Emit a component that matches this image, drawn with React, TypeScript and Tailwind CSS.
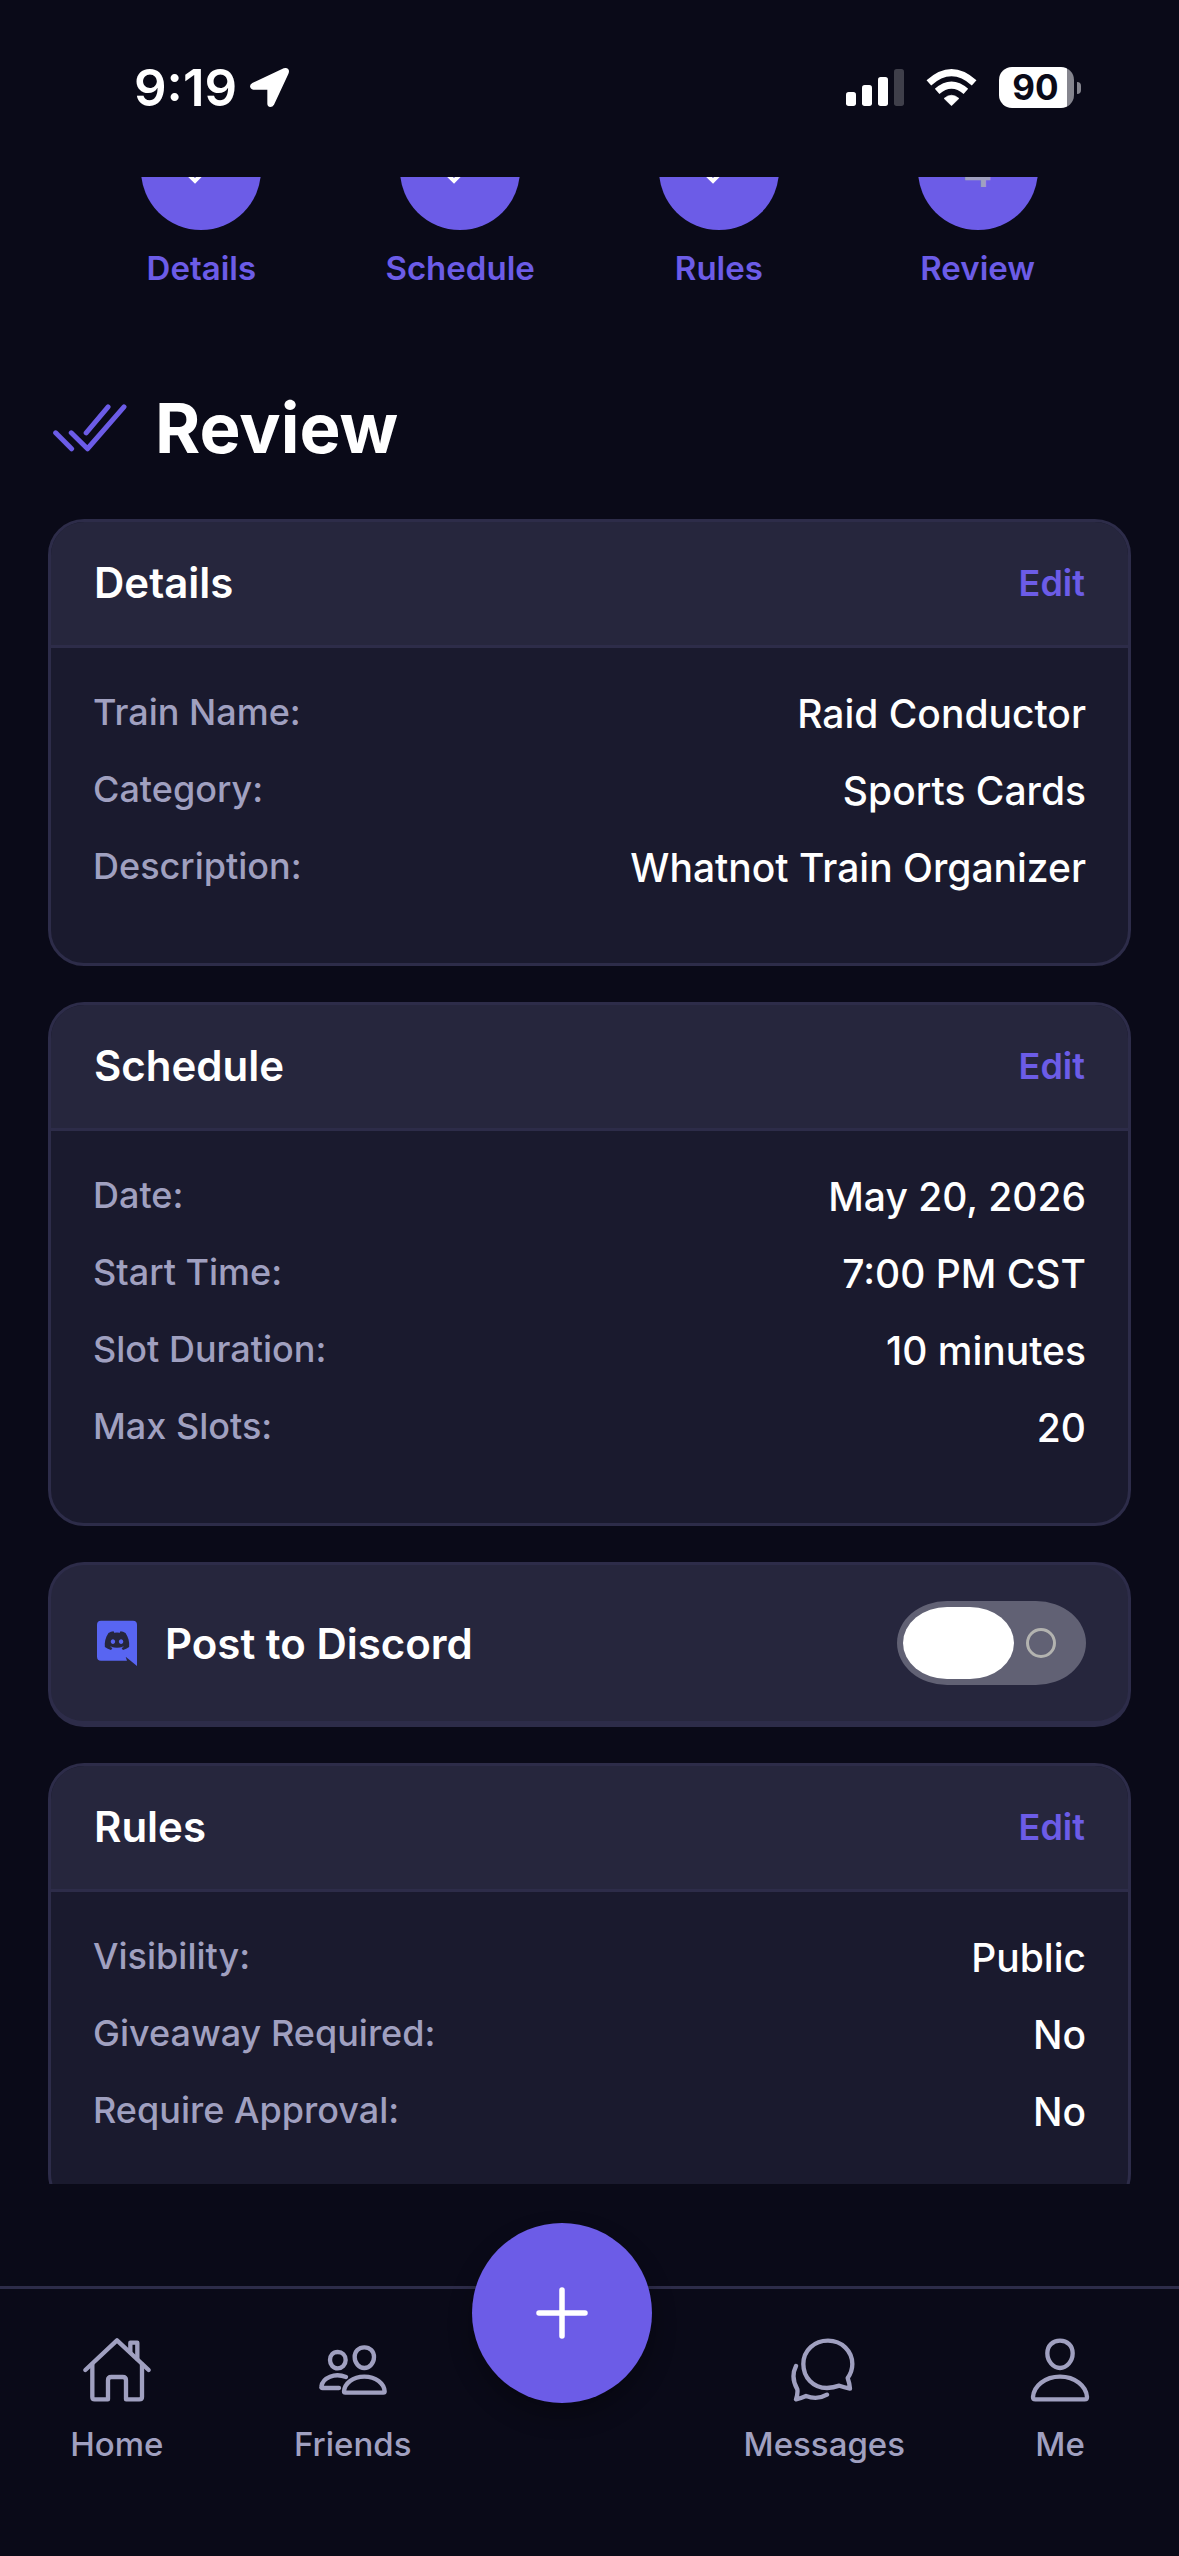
import { useState } from "react";
import type { ReactNode } from "react";
import { FaDiscord } from "react-icons/fa";

type Row = { label: string; value: string };

const steps = ["Details", "Schedule", "Rules", "Review"];

const details: Row[] = [
  { label: "Train Name:", value: "Raid Conductor" },
  { label: "Category:", value: "Sports Cards" },
  { label: "Description:", value: "Whatnot Train Organizer" },
];

const schedule: Row[] = [
  { label: "Date:", value: "May 20, 2026" },
  { label: "Start Time:", value: "7:00 PM CST" },
  { label: "Slot Duration:", value: "10 minutes" },
  { label: "Max Slots:", value: "20" },
];

const rules: Row[] = [
  { label: "Visibility:", value: "Public" },
  { label: "Giveaway Required:", value: "No" },
  { label: "Require Approval:", value: "No" },
];

function LocationArrow() {
  return (
    <svg viewBox="0 0 117 117" className="h-[39px] w-[39px]" fill="white" aria-hidden="true">
      <path d="M7 45 L101 1 Q110 -2 115 4 Q119 9 115 18 L72 110 Q68 117 61 117 Q52 116 52 107 V65 H10 Q1 64 0 55 Q0 49 7 45Z" />
    </svg>
  );
}

function Signal() {
  return (
    <svg viewBox="0 0 174 111" className="h-[37px] w-[58px]" fill="white" aria-hidden="true">
      <rect x="0" y="69" width="30" height="42" rx="8" />
      <rect x="48" y="48" width="30" height="63" rx="8" />
      <rect x="96" y="24" width="30" height="87" rx="8" />
      <rect x="144" y="0" width="30" height="111" rx="8" opacity="0.22" />
    </svg>
  );
}

function Wifi() {
  return (
    <svg viewBox="0 0 153 112" className="h-[37px] w-[51px]" aria-hidden="true">
      <path d="M76.5 111 L54 89 Q76.5 70 99 89Z" fill="white" stroke="white" strokeWidth="2" strokeLinejoin="round" />
      <g fill="none" stroke="white" strokeWidth="21">
        <path d="M33 68 Q76.5 30 120 68" />
        <path d="M8 42 Q76.5 -20 145 42" />
      </g>
    </svg>
  );
}

function StatusBar() {
  return (
    <header className="flex h-[177px] shrink-0 items-center justify-between pb-[2px] pl-[134px] pr-[98px]">
      <div className="flex items-center gap-[13px]">
        <span className="text-[51px] font-semibold leading-none">9:19</span>
        <LocationArrow />
      </div>
      <div className="flex items-center">
        <Signal />
        <div className="ml-[22px] mr-[22px]">
          <Wifi />
        </div>
        <div className="flex h-[41px] w-[75px] items-center justify-center rounded-[13px] bg-linear-to-r from-white from-91% to-[#85858e] to-91% pr-[2px] text-[35px] font-bold leading-none text-[#0a0a18]">
          90
        </div>
        <div className="ml-[3px] h-[12px] w-[4px] rounded-r-full bg-[#85858e]" />
      </div>
    </header>
  );
}

function Steps() {
  return (
    <ol className="grid grid-cols-4 px-[72px]">
      {steps.map((step, i) => (
        <li key={step} className="flex flex-col items-center">
          <div className="flex h-[53px] flex-col justify-end overflow-hidden">
            <div className="flex h-[120px] w-[120px] shrink-0 items-center justify-center rounded-full bg-[#6c5ce7]">
              {i < 3 ? (
                <svg viewBox="0 0 48 48" className="h-[48px] w-[48px]" fill="none" stroke="white" strokeWidth="4" aria-hidden="true">
                  <path d="M5 22 L18 35 L43 9" />
                </svg>
              ) : (
                <span className="text-[46px] font-medium leading-none text-[#a0a0c0]">4</span>
              )}
            </div>
          </div>
          <span className="mt-[16px] text-[33px] font-semibold leading-[44px] text-[#6c5ce7]">{step}</span>
        </li>
      ))}
    </ol>
  );
}

function CardHeader({ title }: { title: string }) {
  return (
    <div className="flex h-[126px] items-center justify-between border-b-[3px] border-[#2d2c49] bg-[#26263d] px-[43px] pb-[2px]">
      <h2 className="text-[42px] font-semibold">{title}</h2>
      <button type="button" aria-label={`Edit ${title}`} className="text-[36px] font-semibold text-[#6c5ce7]">
        Edit
      </button>
    </div>
  );
}

function Card({ title, rows }: { title: string; rows: Row[] }) {
  return (
    <section className="shrink-0 overflow-hidden rounded-[36px] border-[3px] border-[#2d2c49] bg-[#1a1a2e]">
      <CardHeader title={title} />
      <dl className="flex flex-col gap-6 px-[42px] pb-[69px] pt-[39px]">
        {rows.map((row) => (
          <div key={row.label} className="flex items-start justify-between">
            <dt className="text-[36px] font-medium leading-[50px] text-[#a0a0c0]">{row.label}</dt>
            <dd className="text-[39px] font-medium leading-[53px]">{row.value}</dd>
          </div>
        ))}
      </dl>
    </section>
  );
}

function DiscordCard() {
  const [on, setOn] = useState(false);
  return (
    <section className="flex h-[165px] shrink-0 items-center justify-between rounded-[36px] border-[3px] border-b-[6px] border-[#2d2c49] bg-[#26263d] px-[42px]">
      <label htmlFor="discord" className="flex items-center gap-[28px] text-[42px] font-semibold">
        <svg viewBox="0 0 120 138" className="ml-[4px] h-[46px] w-[40px]" aria-hidden="true">
          <path d="M12 2 H108 Q120 2 120 14 V138 L86 110 L90 122 H12 Q0 122 0 110 V14 Q0 2 12 2Z" fill="#5865f2" />
          <FaDiscord x={20} y={22} size={80} color="#26263d" />
        </svg>
        Post to Discord
      </label>
      <div className="relative h-[84px] w-[189px]">
        <input
          id="discord"
          type="checkbox"
          role="switch"
          checked={on}
          onChange={(e) => setOn(e.target.checked)}
          className="peer block h-full w-full appearance-none rounded-[50px/42px] bg-[#616174] checked:bg-[#6c5ce7]"
        />
        <span className="pointer-events-none absolute left-[6px] top-[6px] h-[72px] w-[111px] rounded-[44px/36px] bg-white peer-checked:left-[72px]" />
        <span className="pointer-events-none absolute right-[30px] top-[27px] h-[30px] w-[30px] rounded-full border-[3px] border-[#b3b3b0] peer-checked:hidden" />
      </div>
    </section>
  );
}

function NavIcon({ viewBox, children }: { viewBox: string; children: ReactNode }) {
  return (
    <svg
      viewBox={viewBox}
      className="h-[72px] w-[72px]"
      fill="none"
      stroke="currentColor"
      strokeWidth="13"
      strokeLinecap="round"
      strokeLinejoin="round"
      aria-hidden="true"
    >
      {children}
    </svg>
  );
}

function NavItem({ label, icon }: { label: string; icon: ReactNode }) {
  return (
    <a
      href={`#${label.toLowerCase()}`}
      className="flex flex-col items-center pr-[2px] pt-[45px] text-[33px] font-medium leading-[44px] text-[#a0a0c0]"
    >
      {icon}
      <span className="mt-[16px]">{label}</span>
    </a>
  );
}

function TabBar() {
  return (
    <nav className="mt-[102px] grid h-[270px] shrink-0 grid-cols-5 border-t-[3px] border-[#2d2c49]">
      <NavItem
        label="Home"
        icon={
          <NavIcon viewBox="243 522 216 216">
            <path d="M256 630 L351 541 L446 630" />
            <path d="M391 575 V548 H412 V596" />
            <path d="M277 613 V711 Q277 718 284 718 H324 V661 Q324 651 334 651 H368 Q378 651 378 661 V718 H418 Q426 718 426 711 V613" />
          </NavIcon>
        }
      />
      <NavItem
        label="Friends"
        icon={
          <NavIcon viewBox="951 522 216 216">
            <path d="M1093 562 C1110 562 1122 574 1122 591 C1122 609 1109 624 1093 624 C1077 624 1064 609 1064 591 C1064 574 1076 562 1093 562Z" />
            <path d="M1013 576 C1027 576 1037 586 1037 600 C1037 614 1026 625 1013 625 C1000 625 990 614 990 600 C990 586 999 576 1013 576Z" />
            <path d="M1032 694 C1034 670 1058 650 1093 650 C1128 650 1152 670 1154 694 Q1154 698 1150 698 H1036 Q1032 698 1032 694Z" />
            <path d="M1038 651 C1005 638 968 652 964 680 Q963 684 968 684 H1017" />
          </NavIcon>
        }
      />
      <div className="flex items-start">
        <button
          type="button"
          aria-label="Create"
          className="-mt-[66px] flex h-[180px] w-[180px] items-center justify-center rounded-full bg-[#6c5ce7] shadow-[0_12px_24px_rgba(0,0,0,0.3)]"
        >
          <svg viewBox="0 0 52 52" className="h-[52px] w-[52px]" stroke="white" strokeWidth="5.500" strokeLinecap="round" aria-hidden="true">
            <path d="M26 3 V49 M3 26 H49" />
          </svg>
        </button>
      </div>
      <NavItem
        label="Messages"
        icon={
          <NavIcon viewBox="270 222 216 216">
            <path d="M387 384 C345 384 316 352 316 312 C316 270 350 242 390 242 C432 242 463 274 463 312 C463 330 457 343 449 354 Q455 371 456 386 Q438 382 424 377 Q406 383 387 384Z" />
            <path d="M294 318 C283 340 283 362 298 388 Q300 400 294 418 Q308 415 324 408 C345 416 368 415 387 404" />
          </NavIcon>
        }
      />
      <NavItem
        label="Me"
        icon={
          <NavIcon viewBox="972 222 216 216">
            <path d="M1080 242 C1102 242 1118 257 1118 280 C1118 304 1100 324 1080 324 C1060 324 1042 304 1042 280 C1042 257 1058 242 1080 242Z" />
            <path d="M999 411 C1001 378 1035 350 1080 350 C1125 350 1159 378 1161 411 Q1161 418 1154 418 H1006 Q999 418 999 411Z" />
          </NavIcon>
        }
      />
    </nav>
  );
}

export default function App() {
  return (
    <div className="flex h-screen flex-col overflow-hidden bg-[#0a0a18] font-['Inter',sans-serif] text-white">
      <StatusBar />
      <main className="min-h-0 flex-1 overflow-y-auto [scrollbar-width:none]">
        <Steps />
        <div className="mt-[88px] flex items-center gap-[28px] px-[51px]">
          <svg
            viewBox="159 131 223 143"
            className="ml-[2px] h-[48px] w-[74px]"
            fill="none"
            stroke="#6c5ce7"
            strokeWidth="15"
            strokeLinecap="round"
            strokeLinejoin="round"
            aria-hidden="true"
          >
            <path d="M167 217 L215 265" />
            <path d="M259 217 L325 139" />
            <path d="M214 217 L263 265 L373 139" />
          </svg>
          <h1 className="text-[69px] font-bold leading-[100px]">Review</h1>
        </div>
        <div className="mt-[41px] flex flex-col gap-9 px-12">
          <Card title="Details" rows={details} />
          <Card title="Schedule" rows={schedule} />
          <DiscordCard />
          <Card title="Rules" rows={rules} />
        </div>
      </main>
      <TabBar />
    </div>
  );
}
